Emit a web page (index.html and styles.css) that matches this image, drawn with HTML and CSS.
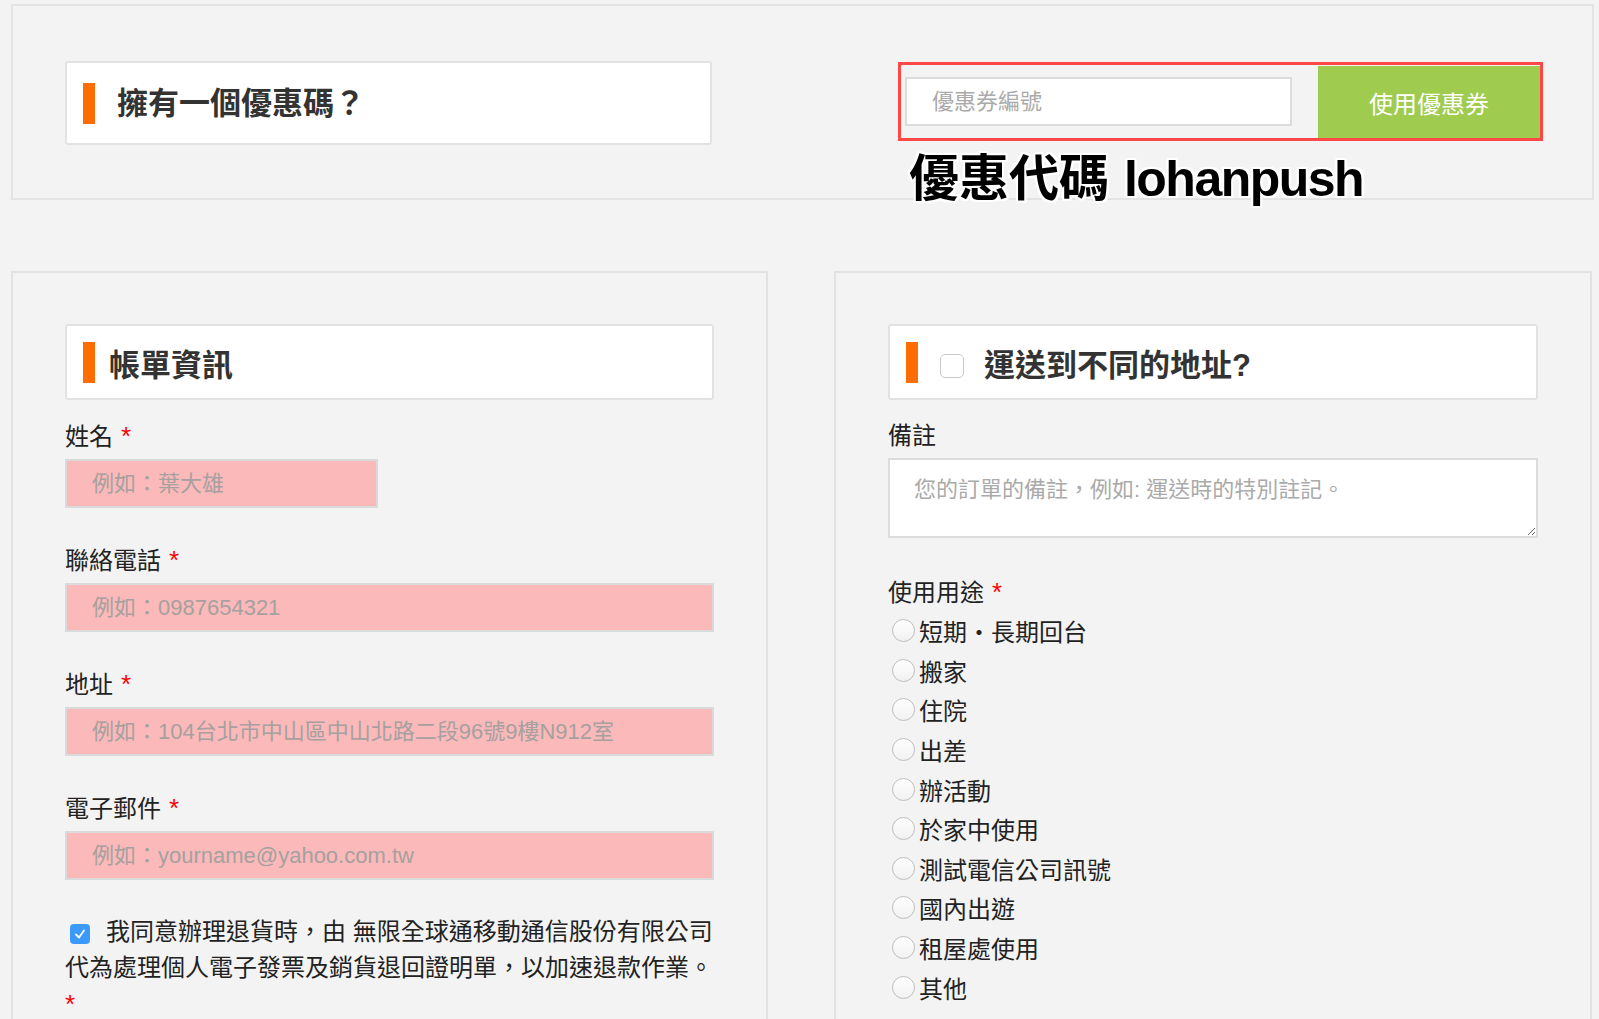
FILE: index.html
```html
<!DOCTYPE html>
<html lang="zh-TW">
<head>
    <meta charset="UTF-8">
    <meta name="viewport" content="width=device-width, initial-scale=1.0">
    <title>結帳</title>
    <link rel="stylesheet" href="styles.css">
</head>
<body>
    <div class="coupon-section">
        <div class="title-card coupon-card">
            <span class="bar"></span>
            <h2 class="card-title coupon-title">擁有一個優惠碼？</h2>
        </div>

        <form class="coupon-form" onsubmit="return false;">
            <input type="text" class="coupon-input" placeholder="優惠券編號">
            <button type="submit" class="coupon-btn">使用優惠券</button>
            <div class="coupon-note">優惠代碼 <span class="code">lohanpush</span></div>
        </form>
    </div>

    <div class="checkout">
        <!-- 帳單資訊 -->
        <div class="panel">
            <div class="title-card">
                <span class="bar"></span>
                <h2 class="card-title">帳單資訊</h2>
            </div>

            <div class="field">
                <label class="field-label">姓名<span class="req">*</span></label>
                <input type="text" class="text-input short" placeholder="例如：葉大雄">
            </div>
            <div class="field">
                <label class="field-label">聯絡電話<span class="req">*</span></label>
                <input type="text" class="text-input" placeholder="例如：0987654321">
            </div>
            <div class="field">
                <label class="field-label">地址<span class="req">*</span></label>
                <input type="text" class="text-input" placeholder="例如：104台北市中山區中山北路二段96號9樓N912室">
            </div>
            <div class="field">
                <label class="field-label">電子郵件<span class="req">*</span></label>
                <input type="text" class="text-input" placeholder="例如：yourname@yahoo.com.tw">
            </div>

            <p class="agree">
                <span class="check-on"><svg width="14" height="14" viewBox="0 0 14 14"><path d="M3 7.5 L6 10.5 L11 3.5" fill="none" stroke="#fff" stroke-width="1.8" stroke-linecap="round" stroke-linejoin="round"/></svg></span>我同意辦理退貨時，由 無限全球通移動通信股份有限公司<br>代為處理個人電子發票及銷貨退回證明單，以加速退款作業。<br><span class="req first">*</span>
            </p>
        </div>

        <!-- 運送資訊 -->
        <div class="panel">
            <div class="title-card">
                <span class="bar"></span>
                <span class="check-off"></span>
                <h2 class="card-title ship-title">運送到不同的地址?</h2>
            </div>

            <div class="field">
                <label class="field-label">備註</label>
                <textarea class="note-input" placeholder="您的訂單的備註，例如: 運送時的特別註記。"></textarea>
            </div>

            <div class="field purpose">
                <label class="field-label">使用用途<span class="req">*</span></label>
                <div class="radio-list">
                    <label class="radio-row"><input type="radio" name="use">短期・長期回台</label>
                    <label class="radio-row"><input type="radio" name="use">搬家</label>
                    <label class="radio-row"><input type="radio" name="use">住院</label>
                    <label class="radio-row"><input type="radio" name="use">出差</label>
                    <label class="radio-row"><input type="radio" name="use">辦活動</label>
                    <label class="radio-row"><input type="radio" name="use">於家中使用</label>
                    <label class="radio-row"><input type="radio" name="use">測試電信公司訊號</label>
                    <label class="radio-row"><input type="radio" name="use">國內出遊</label>
                    <label class="radio-row"><input type="radio" name="use">租屋處使用</label>
                    <label class="radio-row"><input type="radio" name="use">其他</label>
                </div>
            </div>
        </div>
    </div>
</body>
</html>
```

FILE: styles.css
```css
body {
    margin: 0;
    padding: 4px 7px 0 11px;
    background: #f3f3f3;
    font-family: "Liberation Sans", "Noto Sans CJK TC", sans-serif;
    color: #222;
}
.coupon-section {
    display: flex;
    justify-content: space-between;
    align-items: flex-start;
    margin-right: -2px;
    padding: 55px 49px 53px 52px;
    border: 2px solid #e3e3e3;
}
.title-card {
    display: flex;
    align-items: center;
    height: 76px;
    padding-left: 16px;
    background: #fff;
    border: 2px solid #e2e2e2;
    border-radius: 3px;
    box-sizing: border-box;
}
.coupon-card {
    width: 647px;
    height: 84px;
}
.bar {
    flex-shrink: 0;
    width: 12px;
    height: 41px;
    background: #ff6d00;
}
.card-title {
    margin: 0 0 0 14px;
    font-size: 31px;
    line-height: 1;
    font-weight: bold;
    color: #333;
}
.panel .card-title {
    margin-top: 6px;
}
.coupon-title {
    margin-left: 22px;
}
.panel .ship-title {
    margin-left: 20px;
}
.check-off {
    flex-shrink: 0;
    width: 22px;
    height: 22px;
    margin: 8px 0 0 22px;
    background: #fff;
    border: 1px solid #c9c9c9;
    border-radius: 5px;
}
.coupon-form {
    position: relative;
    display: flex;
    align-items: center;
    width: 645px;
    height: 79px;
    margin: 1px 0 0;
    padding-left: 4px;
    border: 3px solid #ff4747;
    box-sizing: border-box;
}
.coupon-input {
    width: 387px;
    height: 49px;
    padding: 0 25px;
    border: 2px solid #dcdcdc;
    background: #fff;
    font-family: inherit;
    font-size: 22px;
    box-sizing: border-box;
    outline: none;
}
.coupon-input::placeholder {
    color: #aaa;
}
.coupon-btn {
    width: 222px;
    height: 72px;
    margin: 1px 0 0 auto;
    border: none;
    background: #9fcc4f;
    color: #fff;
    font-family: inherit;
    font-size: 24px;
    cursor: pointer;
}
.coupon-note {
    position: absolute;
    left: 8px;
    top: 89px;
    white-space: nowrap;
    font-size: 50px;
    line-height: 1;
    font-weight: bold;
    color: #000;
    text-shadow: 2px 0 0 #fff, -2px 0 0 #fff, 0 2px 0 #fff, 0 -2px 0 #fff,
        2px 2px 0 #fff, -2px -2px 0 #fff, 2px -2px 0 #fff, -2px 2px 0 #fff,
        0 0 4px #fff;
}
.coupon-note .code {
    margin-left: 1px;
    letter-spacing: -1.5px;
}
.checkout {
    display: grid;
    grid-template-columns: 757px 758px;
    column-gap: 66px;
    margin-top: 71px;
}
.panel {
    padding: 51px 52px 80px;
    border: 2px solid #e2e2e2;
    border-bottom: none;
    box-sizing: border-box;
}
.field {
    margin-top: 38px;
}
.title-card + .field {
    margin-top: 22px;
}
.field-label {
    display: block;
    margin-bottom: 8px;
    font-size: 24px;
    line-height: 28px;
    color: #222;
}
.req {
    margin-left: 8px;
    color: #f00;
    font-size: 26px;
}
.req.first {
    margin-left: 0;
}
.text-input {
    display: block;
    width: 100%;
    height: 49px;
    padding: 0 25px;
    border: 2px solid #dadada;
    background: #fbb9b9;
    font-family: inherit;
    font-size: 22px;
    box-sizing: border-box;
    outline: none;
}
.text-input.short {
    width: 313px;
}
.text-input::placeholder {
    color: #a6a0a0;
}
.agree {
    margin: 34px 0 0;
    font-size: 24px;
    line-height: 36px;
    color: #222;
}
.check-on {
    display: inline-flex;
    align-items: center;
    justify-content: center;
    width: 20px;
    height: 20px;
    margin: 0 16px 0 5px;
    vertical-align: -1px;
    background: #3b99fc;
    border-radius: 4px;
}
.note-input {
    display: block;
    width: 100%;
    height: 80px;
    padding: 15px 24px 9px;
    border: 2px solid #dcdcdc;
    background: #fff;
    font-family: inherit;
    font-size: 22px;
    line-height: 30px;
    box-sizing: border-box;
    outline: none;
}
.note-input::placeholder {
    color: #aaa;
}
.purpose {
    margin-top: 40px;
}
.purpose .field-label {
    margin-bottom: 4px;
}
.radio-row {
    display: flex;
    align-items: center;
    height: 39.6px;
    font-size: 24px;
    color: #222;
}
.radio-row input {
    appearance: none;
    -webkit-appearance: none;
    width: 23px;
    height: 23px;
    margin: 0 4px;
    border: 1px solid #bdbdbd;
    border-radius: 50%;
    background: linear-gradient(#fff, #f1f1f1);
    box-sizing: border-box;
}
```
